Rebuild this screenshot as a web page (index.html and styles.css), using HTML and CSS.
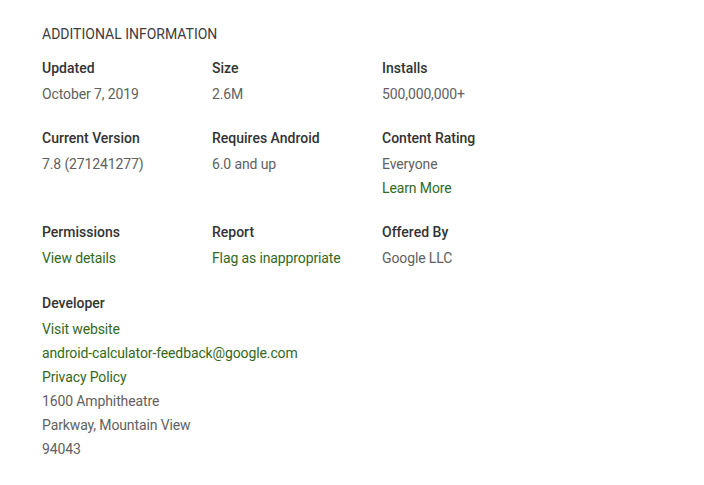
FILE: index.html
```html
<!DOCTYPE html>
<html>
<head>
  <meta charset="UTF-8" />
  <title>Additional Information</title>
  <link rel="stylesheet" href="styles.css">
</head>
<body>
  <div class="container">
    <h2 class="title">ADDITIONAL INFORMATION</h2>

    <div class="info-grid">
      <div class="item">
        <div class="label">Updated</div>
        <div class="value">October 7, 2019</div>
      </div>
      <div class="item">
        <div class="label">Size</div>
        <div class="value">2.6M</div>
      </div>
      <div class="item">
        <div class="label">Installs</div>
        <div class="value">500,000,000+</div>
      </div>

      <div class="item">
        <div class="label">Current Version</div>
        <div class="value">7.8 (271241277)</div>
      </div>
      <div class="item">
        <div class="label">Requires Android</div>
        <div class="value">6.0 and up</div>
      </div>
      <div class="item">
        <div class="label">Content Rating</div>
        <div class="value">Everyone</div>
        <div class="value"><a class="link" href="#">Learn More</a></div>
      </div>

      <div class="item">
        <div class="label">Permissions</div>
        <div class="value"><a class="link" href="#">View details</a></div>
      </div>
      <div class="item">
        <div class="label">Report</div>
        <div class="value"><a class="link" href="#">Flag as inappropriate</a></div>
      </div>
      <div class="item">
        <div class="label">Offered By</div>
        <div class="value">Google LLC</div>
      </div>

      <div class="item developer">
        <div class="label">Developer</div>
        <div class="value"><a class="link" href="#">Visit website</a></div>
        <div class="value nowrap"><a class="link" href="#">android-calculator-feedback@google.com</a></div>
        <div class="value"><a class="link" href="#">Privacy Policy</a></div>
        <div class="value">1600 Amphitheatre Parkway, Mountain View 94043</div>
      </div>
    </div>
  </div>
</body>
</html>
```

FILE: styles.css
```css
body {
  background-color: white;
  color: #333;
  font-family: Roboto, 'Liberation Sans', sans-serif;
  font-size: 14px;
  margin: 0;
}
.container {
  padding: 22px 42px;
}
.title {
  font-size: 14px;
  font-weight: 400;
  line-height: 24px;
  margin: 0 0 10px 0;
  color: #3c3c3c;
}
.info-grid {
  display: grid;
  grid-template-columns: repeat(3, 170px);
  row-gap: 20px;
}
.developer {
  margin-top: 1px;
}
.label {
  font-weight: 500;
  line-height: 24px;
  margin-bottom: 2px;
  color: #333;
}
.value {
  line-height: 24px;
  color: #616161;
  letter-spacing: -0.12px;
}
.nowrap {
  white-space: nowrap;
}
.link {
  color: #33691e;
  text-decoration: none;
}
```
